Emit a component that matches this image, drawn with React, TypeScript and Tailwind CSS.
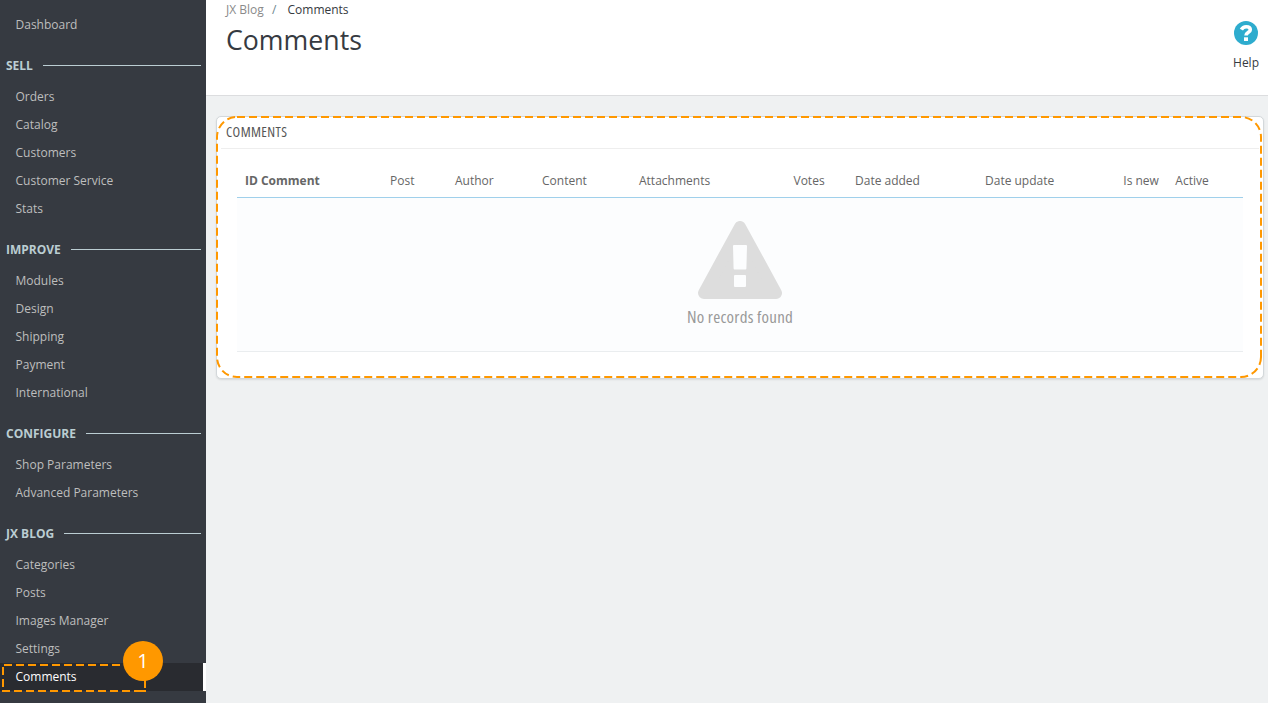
import React from "react";

const sections: { title?: string; items: string[] }[] = [
  { items: ["Dashboard"] },
  { title: "SELL", items: ["Orders", "Catalog", "Customers", "Customer Service", "Stats"] },
  { title: "IMPROVE", items: ["Modules", "Design", "Shipping", "Payment", "International"] },
  { title: "CONFIGURE", items: ["Shop Parameters", "Advanced Parameters"] },
  { title: "JX BLOG", items: ["Categories", "Posts", "Images Manager", "Settings", "Comments"] },
];

function Sidebar() {
  return (
    <nav className="h-full w-[206px] shrink-0 bg-[#363a41] pt-[11px] text-[12px] text-[#bebebe]">
      {sections.map((s, i) => (
        <div key={i}>
          {s.title && (
            <div className="flex h-11 items-center pt-[9px] pr-[5px] pl-1.5 font-bold text-[#bbcdd2]">
              <span className="leading-[18px]">{s.title}</span>
              <span className="ml-[10px] h-px flex-1 bg-[#bbcdd2]" />
            </div>
          )}
          {s.items.map((t) =>
            t === "Comments" ? (
              <div key={t} className="relative h-7 border-r-[3px] border-white bg-[#292b30] pl-[15.5px] leading-7 text-white">
                {t}
                <svg className="absolute top-0 left-0" width="150" height="30" fill="none" stroke="#ff9800" strokeWidth="2">
                  <path d="M4 2H124" strokeDasharray="8 4" />
                  <path d="M3 4V26" strokeDasharray="8 4" />
                  <path d="M2 28H134" strokeDasharray="8 4" />
                  <path d="M134 28H146M145 16V25" />
                </svg>
                <span className="absolute top-[-22px] left-[123px] h-10 w-10 rounded-full bg-[#ff9800] text-center text-[20px] leading-10 text-white">
                  1
                </span>
              </div>
            ) : (
              <div key={t} className="h-7 pl-[15.5px] leading-7">{t}</div>
            )
          )}
        </div>
      ))}
    </nav>
  );
}

const columns: [string, string][] = [
  ["ID Comment", "w-[145px] font-bold"],
  ["Post", "w-[65px]"],
  ["Author", "w-[87px]"],
  ["Content", "w-[97px]"],
  ["Attachments", "w-[154.5px]"],
  ["Votes", "w-[61.5px]"],
  ["Date added", "w-[130px]"],
  ["Date update", "w-[138.3px]"],
  ["Is new", "w-[52px]"],
  ["Active", "flex-1"],
];

export default function App() {
  return (
    <div className="flex h-[703px] w-[1268px] overflow-hidden bg-[#eff1f2] font-['Open_Sans',sans-serif]">
      <Sidebar />
      <main className="min-w-0 flex-1">
        <header className="flex h-24 justify-between border-b border-[#dcdddf] bg-white pr-[9px] pl-5 text-[#363a41]">
          <div>
            <div className="flex h-5 text-[12px] leading-5">
              <span className="w-[46px] text-[#8a8a8a]">JX Blog</span>
              <span className="w-[15.5px] text-[#6c868e]">/</span>
              <span>Comments</span>
            </div>
            <h1 className="text-[26.7px] leading-[39px] font-normal">Comments</h1>
          </div>
          <div className="flex flex-col items-center pt-[21px] text-[12px]">
            <svg width="24" height="24" viewBox="0 0 24 24">
              <circle cx="12" cy="12" r="12" fill="#2eacce" />
              <path d="M7.4 8.6C8.4 6.7 10 5.7 12.2 5.7c2.7 0 4.1 1.3 4.1 3 0 2.7-4.3 2.4-4.3 5.9" fill="none" stroke="#fff" strokeWidth="3.6" />
              <path d="M10 16.3h4V20h-4z" fill="#fff" />
            </svg>
            <span className="mt-[8px] leading-[20px]">Help</span>
          </div>
        </header>
        <section className="relative mt-5 ml-[10px] h-[263px] w-[1048px] rounded-[5px] border border-[#d3d8db] bg-white shadow-[0_1px_2px_rgba(0,0,0,0.1)]">
          <div className="mx-1 h-8 border-b border-[#eee] pl-[5px] text-[14px] leading-[30px] tracking-[0.4px] text-[#555] [font-stretch:75%]">
            COMMENTS
          </div>
          <div className="mx-5 mt-4 text-[12px] text-[#666]">
            <div className="flex h-[33px] border-b border-[#a0d0eb] pl-2 leading-[32px]">
              {columns.map(([t, c]) => (
                <div key={t} className={c + " shrink-0 whitespace-nowrap"}>{t}</div>
              ))}
            </div>
            <div className="flex h-[154px] flex-col items-center border-b border-[#eaedef] bg-[#fcfdfe] pt-[23px]">
              <svg width="86" height="78" viewBox="0 0 86 78">
                <path d="M43 6 79 72H7Z" fill="#ddd" stroke="#ddd" strokeWidth="12" strokeLinejoin="round" />
                <path d="M37 24h12q1 0 1 1l-.6 22.400q0 1-1 1H37.600q-1 0-1-1L36 25q0-1 1-1zM38 54h10q1 0 1 1v10q0 1-1 1H38q-1 0-1-1V55q0-1 1-1z" fill="#fcfdfe" />
              </svg>
              <span className="mt-[6px] text-[17px] leading-6 tracking-[0.25px] text-[#999] [font-stretch:75%]">No records found</span>
            </div>
          </div>
          <svg className="pointer-events-none absolute top-[-1px] left-[-1px]" width="1048" height="264" fill="none" stroke="#ff9800" strokeWidth="2" strokeDasharray="8 4">
            <path d="M21 1H1025A20 20 0 0 1 1045 21V241" />
            <path d="M1045 241A20 20 0 0 1 1025 261H21" />
            <path d="M21 261A20 20 0 0 1 1 241V21A20 20 0 0 1 21 1" strokeDashoffset="3.6" />
          </svg>
        </section>
      </main>
    </div>
  );
}
